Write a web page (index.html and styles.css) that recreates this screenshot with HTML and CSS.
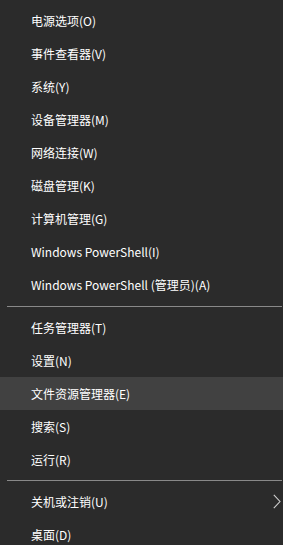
FILE: index.html
```html
<!DOCTYPE html>
<html>
<head>
    <title>Win+X Menu</title>
    <meta charset="utf-8"/>
    <link rel="stylesheet" href="styles.css">
</head>
<body>
    <div class="menu">
        <div class="group">
            <div class="item">电源选项(O)</div>
            <div class="item">事件查看器(V)</div>
            <div class="item">系统(Y)</div>
            <div class="item">设备管理器(M)</div>
            <div class="item">网络连接(W)</div>
            <div class="item">磁盘管理(K)</div>
            <div class="item">计算机管理(G)</div>
            <div class="item">Windows PowerShell(I)</div>
            <div class="item">Windows PowerShell (管理员)(A)</div>
        </div>
        <div class="separator sep-first"></div>
        <div class="group">
            <div class="item">任务管理器(T)</div>
            <div class="item">设置(N)</div>
            <div class="item active">文件资源管理器(E)</div>
            <div class="item">搜索(S)</div>
            <div class="item">运行(R)</div>
        </div>
        <div class="separator"></div>
        <div class="group">
            <div class="item has-sub">
                <span>关机或注销(U)</span>
                <svg class="chevron" width="8" height="15" viewBox="0 0 8 15">
                    <polyline points="0.8,0.8 7,7.5 0.8,14.2" fill="none" stroke="#d0d0d0" stroke-width="1.1"/>
                </svg>
            </div>
            <div class="item">桌面(D)</div>
        </div>
    </div>
</body>
</html>
```

FILE: styles.css
```css
html, body {
    margin: 0;
    padding: 0;
    background-color: #2b2b2b;
}

.menu {
    padding-top: 4px;
    font-family: "Noto Sans CJK SC", "Noto Sans", sans-serif;
    font-size: 12px;
    color: #ffffff;
}

.item {
    height: 33px;
    display: flex;
    align-items: center;
    justify-content: space-between;
    padding-left: 31px;
    padding-right: 2px;
    white-space: nowrap;
}

.item.active {
    background-color: #414141;
}

.separator {
    height: 1px;
    margin: 4px 1px 4px 7px;
    background-color: #898989;
}

.sep-first {
    margin-top: 5px;
}

.chevron {
    display: block;
}
```
